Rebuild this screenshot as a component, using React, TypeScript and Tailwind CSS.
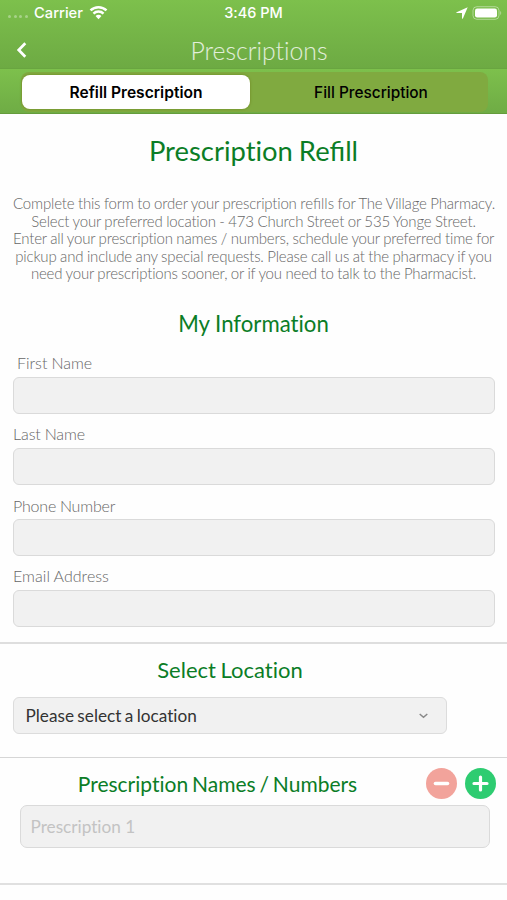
import React, { useState } from 'react';

type Tab = 'refill' | 'fill';

const FIELDS = [
  { name: 'firstName', label: 'First Name', row: 'h-[71px]', labelClass: 'pl-1 w-fit' },
  { name: 'lastName', label: 'Last Name', row: 'h-[71px]', labelClass: 'tracking-[-0.1px]' },
  { name: 'phone', label: 'Phone Number', row: 'h-[71px]', labelClass: 'pt-px tracking-[-0.2px]' },
  { name: 'email', label: 'Email Address', row: 'h-[70px]', labelClass: 'tracking-[0.05px]' },
];

const INTRO = [
  'Complete this form to order your prescription refills for The Village Pharmacy.',
  'Select your preferred location - 473 Church Street or 535 Yonge Street.',
  'Enter all your prescription names / numbers, schedule your preferred time for',
  'pickup and include any special requests. Please call us at the pharmacy if you',
  'need your prescriptions sooner, or if you need to talk to the Pharmacist.',
];

const StatusBar: React.FC = () => (
  <div className="grid h-[26px] grid-cols-3 items-center font-['Inter',sans-serif] text-[14.5px] font-medium text-white">
    <div className="flex items-center pl-2">
      <div className="mr-[6px] flex gap-[2.7px] pt-2">
        {[0, 1, 2, 3].map(i => (
          <span key={i} className="h-[3px] w-[3px] rounded-full bg-white/35" />
        ))}
      </div>
      <span className="text-[14.7px] whitespace-nowrap">Carrier</span>
      <svg className="ml-[6px] shrink-0" width="19" height="15" viewBox="0 0 20 15" fill="none" stroke="white" strokeWidth="2.6">
        <path d="M1.6 5.3a12 12 0 0 1 16.8 0" />
        <path d="M4.7 8.7a7.6 7.6 0 0 1 10.6 0" />
        <path d="M10 14.5 6.9 11.3a4.5 4.5 0 0 1 6.2 0Z" fill="white" stroke="none" />
      </svg>
    </div>
    <div className="text-center">3:46 PM</div>
    <div className="flex items-center justify-end gap-[4px] pr-[5px]">
      <svg width="12" height="12" viewBox="0 0 12 12" fill="white">
        <path d="M11.7.3 6.9 11.4c-.2.5-.9.4-.9-.1V6H.8c-.6 0-.7-.6-.2-.8Z" />
      </svg>
      <svg width="30" height="14" viewBox="0 0 30 14" fill="none">
        <rect x="1" y="0.7" width="26" height="12.6" rx="3.8" stroke="white" strokeOpacity="0.42" />
        <rect x="3" y="2.6" width="22" height="8.8" rx="2.2" fill="white" />
        <path d="M28.3 5v4c1.2-.5 1.2-3.5 0-4Z" fill="white" fillOpacity="0.5" />
      </svg>
    </div>
  </div>
);

// keeps the "fi" ligature while the rest of the page has ligatures off
const withLigature = (text: string) =>
  text.split(/(refills?)/i).map((part, i) =>
    i % 2 === 1 ? (
      <span key={i} className="tracking-normal [font-variant-ligatures:common-ligatures]">{part}</span>
    ) : (
      part
    )
  );

const App: React.FC = () => {
  const [tab, setTab] = useState<Tab>('refill');
  const [count, setCount] = useState(1);

  const tabClass = (t: Tab) =>
    tab === t ? 'bg-white shadow-[0_0_2px_1px_rgba(110,130,30,0.45)]' : 'bg-transparent';

  return (
    <div className="min-h-[900px] w-[507px] bg-[#fefefe] font-['Lato',sans-serif] text-[#666] [font-variant-ligatures:none]">
      <header className="h-[68px] bg-linear-to-b from-[#7dc04c] to-[#6daa43]">
        <StatusBar />
        <div className="flex h-[42px] items-center">
          <button className="w-12 pt-[5px] pl-4" aria-label="Back">
            <svg width="12" height="16" viewBox="0 0 12 16" fill="none" stroke="white" strokeWidth="2.7">
              <path d="M9.3 1.2 2.7 8l6.6 6.8" />
            </svg>
          </button>
          <h1 className="flex-1 pt-[7px] pr-[37px] text-center text-[24.8px] leading-7 font-light text-white/80">Prescriptions</h1>
        </div>
      </header>

      <div className="h-[46px] border-t border-b border-t-[#69a540] border-b-[#659c3c] bg-linear-to-b from-[#7dc04c] to-[#6fac45] pt-[3px] pl-[21px]">
        <div className="flex h-[40px] w-[467px] items-center rounded-lg bg-[#80aa40] font-['Inter',sans-serif] text-black">
          <button
            onClick={() => setTab('refill')}
            className={`ml-px h-[34px] w-[228px] rounded-[8px] pt-[2px] text-[15.6px] font-semibold ${tabClass('refill')}`}
          >
            Refill Prescription
          </button>
          <button
            onClick={() => setTab('fill')}
            className={`mr-px h-[34px] flex-1 rounded-[8px] pt-[2px] pl-[5px] text-[15.4px] font-medium ${tabClass('fill')}`}
          >
            Fill Prescription
          </button>
        </div>
      </div>

      <main>
        <section className="h-[530px] border-b-2 border-[#dedede] px-[13px]">
          <h2 className="pt-[20px] text-center text-[27.4px] leading-[34px] [word-spacing:-1px] text-[#0b7d26]">
            {withLigature('Prescription Refill')}
          </h2>
          <div className="pt-[27px] text-center text-[15px] leading-[17.6px] font-light tracking-[-0.18px] [word-spacing:-0.3px] whitespace-nowrap">
            {INTRO.map(line => (
              <p key={line}>{withLigature(line)}</p>
            ))}
          </div>
          <h3 className="pt-[25px] text-center text-[22.2px] leading-8 text-[#0b7d26]">My Information</h3>
          <div className="pt-[13px]">
            {FIELDS.map(f => (
              <div key={f.name} className={f.row}>
                <label htmlFor={f.name} className={`block h-[24px] text-[16px] leading-[20px] font-light [word-spacing:-0.3px] ${f.labelClass}`}>
                  {f.label}
                </label>
                <input
                  id={f.name}
                  className="block h-[37px] w-[482px] rounded-[6px] border-[1.5px] border-[#dadada] bg-[#f1f1f1] px-3 text-[16px] text-[#333] outline-none"
                />
              </div>
            ))}
          </div>
        </section>

        <section className="h-[114px] border-b border-[#d6d6d6] px-[13px]">
          <h3 className="w-[434px] pt-[10px] text-center text-[22px] leading-8 [word-spacing:-1px] text-[#0b7d26]">Select Location</h3>
          <button className="mt-[11px] flex h-[37px] w-[434px] items-center justify-between rounded-[6px] border-[1.5px] border-[#dcdcdc] bg-[#f1f1f1] pr-[18px] pl-[11.5px] text-[17.2px] [word-spacing:-1px] text-[#333]">
            Please select a location
            <svg width="9" height="6" viewBox="0 0 9 6" fill="none" stroke="#888" strokeWidth="1.5">
              <path d="M.7 1 4.5 4.3 8.3 1" />
            </svg>
          </button>
        </section>

        <section className="h-[127px] border-b-2 border-[#e0e0e0]">
          <div className="flex h-[47px] items-center">
            <h3 className="w-[426px] pt-[5px] pl-[9px] text-center text-[21px] leading-8 [word-spacing:-1.5px] text-[#0b7d26]">Prescription Names / Numbers</h3>
            <div className="flex gap-2 pt-[4px]">
              <button aria-label="Remove" onClick={() => setCount(Math.max(1, count - 1))}>
                <svg width="31" height="31" viewBox="0 0 31 31">
                  <circle cx="15.5" cy="15.5" r="15.5" fill="#f2a39b" />
                  <path d="M9.5 15.5h12" stroke="white" strokeWidth="3.6" strokeLinecap="round" />
                </svg>
              </button>
              <button aria-label="Add" onClick={() => setCount(count + 1)}>
                <svg width="31" height="31" viewBox="0 0 31 31">
                  <circle cx="15.5" cy="15.5" r="15.5" fill="#2ecc71" />
                  <path d="M9 15.5h13M15.5 9v13" stroke="white" strokeWidth="3.2" strokeLinecap="round" />
                </svg>
              </button>
            </div>
          </div>
          {Array.from({ length: count }, (_, i) => (
            <input
              key={i}
              placeholder={`Prescription ${i + 1}`}
              className="ml-[20px] block h-[43px] w-[470px] rounded-[7px] border-[1.5px] border-[#dadada] bg-[#f1f1f1] px-[9.5px] text-[17.2px] text-[#333] outline-none placeholder:text-[#c3c3c3]"
            />
          ))}
        </section>
      </main>
    </div>
  );
};

export default App;
